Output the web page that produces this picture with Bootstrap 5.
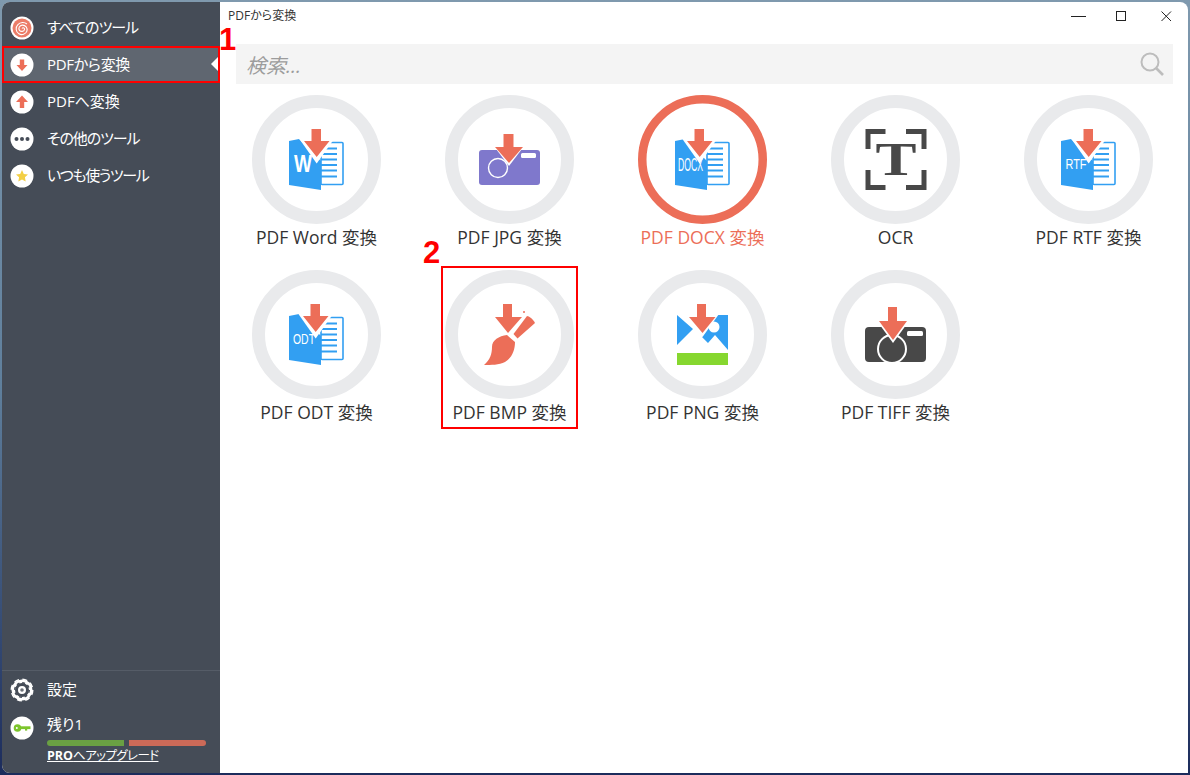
<!DOCTYPE html>
<html lang="ja">
<head>
<meta charset="utf-8">
<title>PDFから変換</title>
<link href="https://cdn.jsdelivr.net/npm/bootstrap@5.3.0/dist/css/bootstrap.min.css" rel="stylesheet">
<style>
html,body{height:100%;}
body{width:1190px;height:775px;overflow:hidden;padding:2px;background:linear-gradient(180deg,#7f99ae 0%,#5f7f9c 50%,#1c2c5c 100%);font-family:"Open Sans","Noto Sans CJK JP",sans-serif;font-feature-settings:"palt";color:#333;}
.app-win{width:1186px;height:771px;background:#fff;border-radius:8px 8px 0 8px;overflow:hidden;position:relative;}
.side{width:218px;background:#454c57;color:#fff;flex:none;}
.side-item{height:37px;font-size:15px;padding-left:8px;gap:13px;position:relative;}
.side-top{padding-top:7px;}
.ic22{width:24px;height:24px;flex:none;}
.side-active{background:#5f6670;box-shadow:inset 0 0 0 2px #f00;}
.side-active::after{content:"";position:absolute;right:2px;top:11px;border:7px solid transparent;border-right-color:#fff;border-left-width:0;}
.tight-a{letter-spacing:-1px;}
.tight-b{letter-spacing:-1.1px;}
.tight-c{letter-spacing:-1.4px;}
.tight-d{letter-spacing:-.3px;}
.side-foot{border-top:1px solid #555c67;height:103px;}
.icon-low{margin-top:8px;}
.remain-box{padding-top:7px;}
.remain-text{font-size:15px;line-height:18px;}
.meter{gap:5px;height:6px;margin-top:7px;width:159px;}
.meter-a{background:#6aa043;width:77px;border-radius:3px 0 0 3px;}
.meter-b{background:#cc6a58;width:77px;border-radius:0 3px 3px 0;}
.pro-link{color:#fff;font-size:12.5px;line-height:18px;margin-top:1px;display:block;white-space:nowrap;}
.pro-link span{letter-spacing:-.6px;}
.pro-link:hover{color:#fff;}
.title-bar{height:42px;font-size:12px;color:#333;padding-left:8px;padding-bottom:14px;}
.win-btns{padding-right:16px;padding-top:8px;}
.win-gap-a{margin-left:29px;}
.win-gap-b{margin-left:33px;}
.find-box{height:40px;background:#f4f4f4;margin-left:16px;margin-right:15px;padding:0 8px 0 10px;}
.find-text{font-style:italic;font-size:20px;line-height:24px;padding-top:3px;color:#9c9c9c;}
.tool-grid{display:grid;grid-template-columns:repeat(5,193px);grid-auto-rows:175px;padding-top:11px;}
.tool{position:relative;}
.tool svg{display:block;width:129px;height:129px;}
.tool-label{font-size:17.5px;line-height:22px;margin-top:2px;color:#333;white-space:nowrap;}
.tool-on .tool-label{color:#ec6e58;}
.tool-pick::after{content:"";position:absolute;left:28px;top:-4px;width:137px;height:163px;border:2px solid #f00;}
.note-num{position:absolute;color:#f00;font-weight:700;font-size:31px;line-height:30px;font-family:"Liberation Sans",sans-serif;}
.note-a{left:217px;top:23px;}
.note-b{left:421px;top:236px;}
</style>
</head>
<body>
<svg width="0" height="0" class="position-absolute">
  <defs>
    <g id="ring"><circle cx="64.5" cy="64.5" r="58" fill="none" stroke="#e9eaec" stroke-width="13"/></g>
    <g id="doc">
      <path d="M37 46 47 44 69 66V95L37 90Z" fill="#329ff2"/>
      <rect x="69" y="47.500" width="22" height="42" rx="1" fill="#fff" stroke="#329ff2" stroke-width="1.600"/>
      <path d="M69 53.500H85M69 59H85M69 64.500H85M69 70H85M69 75.500H85M69 81.500H85" stroke="#329ff2" stroke-width="2"/>
    </g>
    <g id="arr">
      <path d="M46 42H83.500L64.700 68.500Z" fill="#fff"/>
      <path d="M59.500 34H69V46H77.500L64.700 62 52 46H59.500Z" fill="#ec6e58"/>
    </g>
  </defs>
</svg>
<div class="app-win d-flex">
  <aside class="side d-flex flex-column">
    <div class="side-top flex-grow-1">
      <div class="side-item d-flex align-items-center">
        <svg class="ic22" viewBox="0 0 24 24"><circle cx="12" cy="12" r="11.500" fill="#fff"/><circle cx="12" cy="12" r="9.500" fill="#ec7d68"/><path d="M12 12.500c1-1.500 3-.5 2.500 1.200-.6 2-3.700 2.300-5 .6-1.500-2 0-5 2.700-5.200 3.300-.2 5.700 2.800 4.700 6-1 3-5 4.500-8 2.700-3.200-2-3.700-6.500-1-9.200 2.500-2.500 6.500-2.700 9-.6" fill="none" stroke="#fff" stroke-width="1.100"/></svg>
        <span class="tight-a">すべてのツール</span>
      </div>
      <div class="side-item side-active d-flex align-items-center">
        <svg class="ic22" viewBox="0 0 24 24"><circle cx="12" cy="12" r="11.500" fill="#fff"/><path d="M9.800 6.500h4.400v5.500h3.300L12 18 6.500 12h3.300Z" fill="#ec6e58"/></svg>
        <span class="tight-d">PDFから変換</span>
      </div>
      <div class="side-item d-flex align-items-center">
        <svg class="ic22" viewBox="0 0 24 24"><circle cx="12" cy="12" r="11.500" fill="#fff"/><path d="M9.800 18h4.400v-6h3.800L12 5.500 6 12h3.800Z" fill="#ec6e58"/></svg>
        <span>PDFへ変換</span>
      </div>
      <div class="side-item d-flex align-items-center">
        <svg class="ic22" viewBox="0 0 24 24"><circle cx="12" cy="12" r="11.500" fill="#fff"/><circle cx="6.500" cy="12" r="2" fill="#454c57"/><circle cx="12" cy="12" r="2" fill="#454c57"/><circle cx="17.500" cy="12" r="2" fill="#454c57"/></svg>
        <span class="tight-b">その他のツール</span>
      </div>
      <div class="side-item d-flex align-items-center">
        <svg class="ic22" viewBox="0 0 24 24"><circle cx="12" cy="12" r="11.500" fill="#fff"/><path d="M12 6l1.800 3.900 4.200.5-3.100 2.900.8 4.200L12 15.400l-3.700 2.100.8-4.200L6 10.400l4.200-.5Z" fill="#f3cf45"/></svg>
        <span class="tight-c">いつも使うツール</span>
      </div>
    </div>
    <div class="side-foot">
      <div class="side-item d-flex align-items-center">
        <svg class="ic22" viewBox="0 0 24 24"><circle cx="12" cy="12" r="10.500" fill="#fff"/><circle cx="12" cy="12" r="10.800" fill="none" stroke="#fff" stroke-width="1.400" stroke-dasharray="5 3.500"/><circle cx="12" cy="12" r="5.500" fill="none" stroke="#454c57" stroke-width="3"/><circle cx="12" cy="12" r="7.300" fill="none" stroke="#454c57" stroke-width="1.400" stroke-dasharray="2.900 2.830"/><circle cx="12" cy="12" r="1.800" fill="#6d727a"/></svg>
        <span>設定</span>
      </div>
      <div class="side-item d-flex">
        <svg class="ic22 icon-low" viewBox="0 0 24 24"><circle cx="12" cy="12" r="11.500" fill="#fff"/><circle cx="7.500" cy="12" r="3.800" fill="#7cc52c"/><rect x="9" y="10.300" width="11.500" height="2.800" fill="#7cc52c"/><rect x="15" y="12" width="2.200" height="2.600" fill="#7cc52c"/><circle cx="6.800" cy="12" r="1" fill="#fff"/></svg>
        <div class="remain-box">
          <div class="remain-text">残り1</div>
          <div class="meter d-flex"><div class="meter-a"></div><div class="meter-b"></div></div>
          <a class="pro-link" href="#"><b>PRO</b><span>へアップグレード</span></a>
        </div>
      </div>
    </div>
  </aside>
  <main class="flex-grow-1 d-flex flex-column">
    <div class="d-flex justify-content-between">
      <div class="title-bar d-flex align-items-center">PDFから変換</div>
      <div class="win-btns d-flex align-items-start">
        <svg width="16" height="12" viewBox="0 0 16 12"><path d="M1 6.500H16" stroke="#222"/></svg>
        <svg class="win-gap-a" width="12" height="12" viewBox="0 0 12 12"><rect x="1.500" y="1.500" width="9" height="9" fill="none" stroke="#222"/></svg>
        <svg class="win-gap-b" width="12" height="12" viewBox="0 0 12 12"><path d="M1.500 1.500 11 11M11 1.500 1.500 11" stroke="#222"/></svg>
      </div>
    </div>
    <div class="find-box d-flex align-items-center justify-content-between">
      <span class="find-text">検索...</span>
      <svg width="26" height="26" viewBox="0 0 26 26"><circle cx="11" cy="11" r="8.500" fill="none" stroke="#bdbdbd" stroke-width="2"/><path d="M17 17 24 24" stroke="#bdbdbd" stroke-width="2.600"/></svg>
    </div>
    <div class="tool-grid">
      <div class="tool d-flex flex-column align-items-center">
        <svg viewBox="0 0 129 129"><use href="#ring"/><use href="#doc"/><text x="42" y="77" font-family="Liberation Sans" font-weight="700" font-size="23" fill="#fff" textLength="18" lengthAdjust="spacingAndGlyphs">W</text><use href="#arr"/></svg>
        <div class="tool-label">PDF Word 変換</div>
      </div>
      <div class="tool d-flex flex-column align-items-center">
        <svg viewBox="0 0 129 129"><use href="#ring"/><rect x="34" y="55" width="61" height="35" rx="3" fill="#7f78cc"/><circle cx="53" cy="73" r="9.500" fill="none" stroke="#fff" stroke-width="1.400"/><rect x="76" y="58" width="15" height="5" rx="1.500" fill="#fff"/><path d="M48 50H80L64 71Z" fill="#fff"/><rect x="34" y="50" width="61" height="5" fill="#fff"/><path d="M58.500 39H68.500V52H78L64 68 50 52H58.500Z" fill="#ec6e58"/></svg>
        <div class="tool-label">PDF JPG 変換</div>
      </div>
      <div class="tool tool-on d-flex flex-column align-items-center">
        <svg viewBox="0 0 129 129"><circle cx="64.500" cy="64.500" r="60.250" fill="none" stroke="#ec6e58" stroke-width="8.500"/><use href="#doc"/><text x="40" y="76" font-family="Liberation Sans" font-size="19" fill="#fff" textLength="25" lengthAdjust="spacingAndGlyphs">DOCX</text><use href="#arr" x="-3"/></svg>
        <div class="tool-label">PDF DOCX 変換</div>
      </div>
      <div class="tool d-flex flex-column align-items-center">
        <svg viewBox="0 0 129 129"><use href="#ring"/><path d="M54.500 36.500H37V54M75 36.500H93V54M54.500 92.500H37V75M75 92.500H93V75" fill="none" stroke="#484848" stroke-width="5"/><text x="65" y="80" text-anchor="middle" font-family="Liberation Serif" font-weight="700" font-size="46" fill="#484848" textLength="41" lengthAdjust="spacingAndGlyphs">T</text></svg>
        <div class="tool-label">OCR</div>
      </div>
      <div class="tool d-flex flex-column align-items-center">
        <svg viewBox="0 0 129 129"><use href="#ring"/><use href="#doc"/><text x="41.500" y="74" font-family="Liberation Sans" font-size="15.500" fill="#fff" textLength="21" lengthAdjust="spacingAndGlyphs">RTF</text><use href="#arr"/></svg>
        <div class="tool-label">PDF RTF 変換</div>
      </div>
      <div class="tool d-flex flex-column align-items-center">
        <svg viewBox="0 0 129 129"><use href="#ring"/><use href="#doc"/><text x="41" y="74" font-family="Liberation Sans" font-size="15" fill="#fff" textLength="22" lengthAdjust="spacingAndGlyphs">ODT</text><use href="#arr" x="-1"/></svg>
        <div class="tool-label">PDF ODT 変換</div>
      </div>
      <div class="tool tool-pick d-flex flex-column align-items-center">
        <svg viewBox="0 0 129 129"><use href="#ring"/><path d="M39 95C45 90 47 84 47 77 47 70 54 66 62 65L70 72C70 80 67 88 60 92 54 95 46 95 39 95Z" fill="#ec6e58"/><path d="M68.500 64 82 46C84 46 88 49 90 53L72.500 68.500Z" fill="#ec6e58"/><circle cx="79" cy="42" r="1" fill="#ec6e58"/><path d="M58 34H67V47H77L63 63 50 47H58Z" fill="#ec6e58"/></svg>
        <div class="tool-label">PDF BMP 変換</div>
      </div>
      <div class="tool d-flex flex-column align-items-center">
        <svg viewBox="0 0 129 129"><use href="#ring"/><rect x="39" y="83" width="51" height="12" fill="#86d72f"/><path d="M39 45 55 59 39 75ZM90 45V80L77 65 70 73 64 67 78 45Z" fill="#329ff2"/><circle cx="76" cy="57" r="5.500" fill="#fff"/><path d="M48 44H81L64.500 67Z" fill="#fff"/><path d="M59 34H68V47H77.500L64.500 63 51 47H59Z" fill="#ec6e58"/></svg>
        <div class="tool-label">PDF PNG 変換</div>
      </div>
      <div class="tool d-flex flex-column align-items-center">
        <svg viewBox="0 0 129 129"><use href="#ring"/><rect x="34" y="57" width="61" height="35" rx="4" fill="#484848"/><circle cx="61" cy="79" r="14" fill="#484848" stroke="#fff" stroke-width="2"/><rect x="76" y="61" width="16" height="5" rx="1.500" fill="#fff"/><path d="M46 51H78L62 73Z" fill="#fff"/><rect x="34" y="51" width="61" height="6" fill="#fff"/><path d="M57 37H66V51H76L62 70 48 51H57Z" fill="#ec6e58"/></svg>
        <div class="tool-label">PDF TIFF 変換</div>
      </div>
    </div>
  </main>
  <span class="note-num note-a">1</span>
  <span class="note-num note-b">2</span>
</div>
<script src="https://cdn.jsdelivr.net/npm/bootstrap@5.3.0/dist/js/bootstrap.bundle.min.js"></script>
</body>
</html>
